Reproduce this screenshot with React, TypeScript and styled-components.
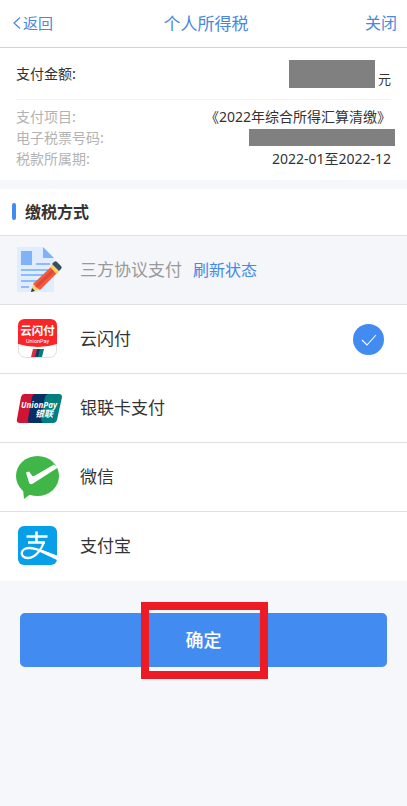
import React, { useState } from "react";
import styled, { createGlobalStyle } from "styled-components";

const GlobalStyle = createGlobalStyle`
  *, *::before, *::after { box-sizing: border-box; }
  body {
    margin: 0;
    background: #f5f7fb;
    color: #333;
    font-family: "Noto Sans CJK SC", "Noto Sans", sans-serif;
    font-size: 14px;
    line-height: 21px;
  }
  button { font: inherit; cursor: pointer; }
`;

const blue = "#428bf1";

const Header = styled.header`
  display: grid;
  grid-template-columns: 1fr auto 1fr;
  align-items: center;
  height: 48px;
  padding: 0 10px 2px 12px;
  background: #fff;
  border-bottom: 1px solid #d3d3d5;
  color: #4987e0;
`;

const HeaderButton = styled.button<{ $end?: boolean }>`
  display: flex;
  align-items: center;
  gap: 2px;
  justify-self: ${(p) => (p.$end ? "end" : "start")};
  padding: 0;
  border: 0;
  background: none;
  color: inherit;
  && { font-size: ${(p) => (p.$end ? 16 : 15)}px; }
`;

const PageTitle = styled.h1`
  margin: 0;
  padding-left: 3px;
  font-size: 17px;
  font-weight: 400;
`;

const Summary = styled.section`
  padding: 0 16px 11px;
  background: #fff;
`;

const AmountRow = styled.div`
  display: flex;
  justify-content: space-between;
  align-items: center;
  height: 52px;
  border-bottom: 1px solid #f3f3f3;
`;

const Amount = styled.span`
  display: flex;
  align-items: flex-end;
  gap: 3px;
  font-size: 13px;
  line-height: 18px;
`;

const Redacted = styled.span<{ $width: number; $height: number; $bleed?: boolean }>`
  width: ${(p) => p.$width}px;
  height: ${(p) => p.$height}px;
  margin-right: ${(p) => (p.$bleed ? -4 : 0)}px;
  background: #808080;
`;

const Details = styled.dl`
  margin: 0;
  padding-top: 6px;
`;

const DetailRow = styled.div`
  display: flex;
  justify-content: space-between;
  align-items: center;
  height: 21px;
`;

const Term = styled.dt`
  color: #b3b3b3;
`;

const Value = styled.dd`
  display: flex;
  margin: 0;
  font-family: "Noto Sans", "Noto Sans CJK SC", sans-serif;
`;

const Methods = styled.fieldset`
  min-width: 0;
  margin: 9px 0 0;
  padding: 0 0 1px;
  border: 0;
  background: #fff;
`;

const SectionTitle = styled.h2`
  display: flex;
  align-items: center;
  gap: 9px;
  height: 46px;
  margin: 0;
  padding: 0 12px 2px;
  font-size: 16px;
  font-weight: 700;
  &::before {
    content: "";
    width: 4px;
    height: 17px;
    border-radius: 2px;
    background: ${blue};
  }
`;

const MethodRow = styled.div<{ $disabled?: boolean }>`
  display: flex;
  align-items: center;
  height: 69px;
  padding-right: 23px;
  border-top: 1px solid #dfe0e4;
  background: ${(p) => (p.$disabled ? "#f5f6fa" : "#fff")};
  color: ${(p) => (p.$disabled ? "#999" : "#333")};
`;

const MethodLabel = styled.label<{ $grow: boolean }>`
  display: flex;
  flex: ${(p) => (p.$grow ? 1 : "none")};
  align-items: center;
  gap: 16px;
  padding-left: 16px;
  font-size: 17px;
  line-height: 24px;
`;

const MethodName = styled.span`
  padding-bottom: 2px;
`;

const IconBox = styled.span`
  display: flex;
  width: 48px;
  height: 48px;
`;

const Refresh = styled.button`
  margin-left: 11px;
  padding: 0 0 2px;
  border: 0;
  background: none;
  color: #4389e8;
  && { font-size: 16px; }
`;

const Radio = styled.input`
  appearance: none;
  width: 31px;
  height: 31px;
  margin: 0;
  border-radius: 50%;
  &:checked {
    background: ${blue} url("data:image/svg+xml,%3Csvg xmlns='http://www.w3.org/2000/svg' viewBox='0 0 31 31'%3E%3Cpath d='M9 16l5 5 9-10' fill='none' stroke='white' stroke-width='1.1'/%3E%3C/svg%3E");
  }
  &:disabled { display: none; }
`;

const Footer = styled.div`
  position: relative;
  padding: 32px 20px;
`;

const Confirm = styled.button`
  display: block;
  width: 100%;
  height: 54px;
  padding: 0 0 2px;
  border: 0;
  border-radius: 5px;
  background: ${blue};
  color: #fff;
  && { font-size: 18px; font-weight: 500; }
`;

const Highlight = styled.span`
  position: absolute;
  inset: 21px 139px 20px 141px;
  border: 8px solid #ed1c24;
  pointer-events: none;
`;

const DocumentIcon = () => (
  <svg width="48" height="48" viewBox="0 0 48 48" aria-hidden="true">
    <path d="M1 1h26l11 11v34H1z" fill="#dfedff" />
    <path d="M27 1l11 11H27z" fill="#7fb2f8" />
    <path d="M5 5h11v14H5z" fill="#7fb2f8" />
    <path d="M20 18h14M5 24h29M5 29h22M5 35h16M5 41h8" stroke="#8dbcf9" strokeWidth="2" />
    <path d="M15 46l3-10 7 7z" fill="#ffd15c" />
    <path d="M15 46l1-4 3 3z" fill="#293947" />
    <path d="M17 38l19-18 6 6-18 18z" fill="#f2593d" />
    <path d="M19 40l19-18 2 2-19 18z" fill="#df4934" />
    <path d="M34 21l2.500-2.500 7 7L40.500 28z" fill="#ffd15c" />
    <path d="M36 18l2-2q1.500-1.500 3 0l4 4q1.500 1.500 0 3l-2 2z" fill="#35505f" />
  </svg>
);

const QuickPassIcon = () => (
  <svg width="48" height="48" viewBox="0 0 48 48" aria-hidden="true">
    <rect x="2.500" y="4.500" width="38" height="38" rx="7" fill="#fff" stroke="#dedede" />
    <path d="M2 29V11q0-7 7-7h25q7 0 7 7v18q-19 6-39 0z" fill="#fa2528" />
    <text x="21.500" y="20" textAnchor="middle" fontSize="11.500" fontWeight="700" fill="#fff">云闪付</text>
    <text x="21.500" y="27.500" textAnchor="middle" fontFamily="Roboto, sans-serif" fontSize="5.500" fill="#fff">UnionPay</text>
    <path d="M17 34h5l-2 8h-5z" fill="#d5303f" />
    <path d="M21 34h4l-2 8h-4z" fill="#173b69" />
    <path d="M24 34h4l-2 8h-4z" fill="#008077" />
  </svg>
);

const UnionPayIcon = () => (
  <svg width="48" height="48" viewBox="0 0 48 48" aria-hidden="true">
    <path d="M8 10h15l-6 29H4q-4 0-3-4l4-22q1-3 3-3z" fill="#cf1436" />
    <path d="M19 10h15l-6 29H15q-4 0-3-4l4-22q1-3 3-3z" fill="#082e64" />
    <path d="M32 10h11q3 0 3 3l-5 23q-1 3-4 3H28q-3 0-3-4l4-22q1-3 3-3z" fill="#007e80" />
    <text fontWeight="700" fontStyle="italic" fill="#fff">
      <tspan x="5" y="24" fontFamily="Open Sans, sans-serif" fontSize="8">UnionPay</tspan>
      <tspan x="19" y="33" fontSize="9">银联</tspan>
    </text>
  </svg>
);

const WeChatPayIcon = () => (
  <svg width="48" height="48" viewBox="0 0 48 48" aria-hidden="true">
    <ellipse cx="21.500" cy="23" rx="21.500" ry="20" fill="#40b649" />
    <path d="M7 36l1 10 8-6z" fill="#40b649" />
    <path d="M10 19.500l3-1 3 4q1 1 3 0l19-11 4 3-25 16q-3 2-4-1z" fill="#fff" />
  </svg>
);

const AlipayIcon = () => (
  <svg width="48" height="48" viewBox="0 0 48 48" aria-hidden="true">
    <rect x="2" y="4" width="39" height="39" rx="6" fill="#069fe8" />
    <path d="M20.500 9.500v11M10.500 14.500h21M12 20.500h17" fill="none" stroke="#fff" strokeWidth="2.600" />
    <path d="M28 20c-2 6-8 16-16 16-9 0-8-10 1-10 8 0 15 4 28 9" fill="none" stroke="#fff" strokeWidth="2.300" />
    <path d="M23 27l18 6.500v4.500l-17-8z" fill="#fff" />
  </svg>
);

const methods = [
  { id: "agreement", name: "三方协议支付", Icon: DocumentIcon, disabled: true },
  { id: "quickpass", name: "云闪付", Icon: QuickPassIcon },
  { id: "unionpay", name: "银联卡支付", Icon: UnionPayIcon },
  { id: "wechat", name: "微信", Icon: WeChatPayIcon },
  { id: "alipay", name: "支付宝", Icon: AlipayIcon },
];

export default function App() {
  const [selected, setSelected] = useState("quickpass");

  return (
    <>
      <GlobalStyle />
      <Header>
        <HeaderButton type="button">
          <svg width="9" height="14" viewBox="0 0 9 14" aria-hidden="true">
            <path d="M8 1.500L2 7l6 5.500" fill="none" stroke="currentColor" strokeWidth="1.200" />
          </svg>
          返回
        </HeaderButton>
        <PageTitle>个人所得税</PageTitle>
        <HeaderButton type="button" $end>关闭</HeaderButton>
      </Header>
      <main>
        <Summary>
          <AmountRow>
            <span>支付金额:</span>
            <Amount>
              <Redacted $width={86} $height={28} />
              元
            </Amount>
          </AmountRow>
          <Details>
            <DetailRow>
              <Term>支付项目:</Term>
              <Value>《2022年综合所得汇算清缴》</Value>
            </DetailRow>
            <DetailRow>
              <Term>电子税票号码:</Term>
              <Value><Redacted $width={146} $height={17} $bleed /></Value>
            </DetailRow>
            <DetailRow>
              <Term>税款所属期:</Term>
              <Value>2022-01至2022-12</Value>
            </DetailRow>
          </Details>
        </Summary>
        <Methods aria-labelledby="methods-title">
          <SectionTitle id="methods-title">缴税方式</SectionTitle>
          {methods.map(({ id, name, Icon, disabled }) => (
            <MethodRow key={id} $disabled={disabled}>
              <MethodLabel htmlFor={id} $grow={!disabled}>
                <IconBox><Icon /></IconBox>
                <MethodName>{name}</MethodName>
              </MethodLabel>
              {disabled && <Refresh type="button">刷新状态</Refresh>}
              <Radio
                type="radio"
                name="method"
                id={id}
                disabled={disabled}
                checked={selected === id}
                onChange={() => setSelected(id)}
              />
            </MethodRow>
          ))}
        </Methods>
        <Footer>
          <Confirm type="button">确定</Confirm>
          <Highlight />
        </Footer>
      </main>
    </>
  );
}
